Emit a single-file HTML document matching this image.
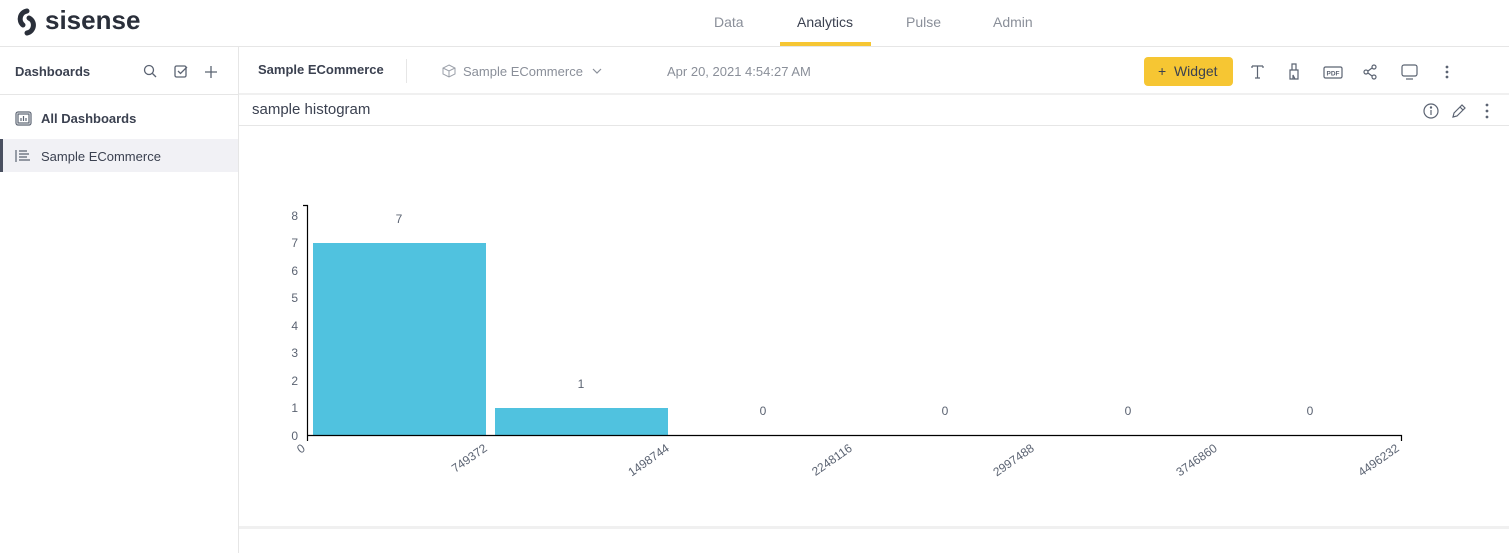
<!DOCTYPE html><html><head><meta charset="utf-8"><style>
*{margin:0;padding:0;box-sizing:border-box}
body{width:1509px;height:553px;background:#fff;font-family:"Liberation Sans",sans-serif;color:#5b6372;position:relative;overflow:hidden}
.abs{position:absolute}
.hdr{left:0;top:0;width:1509px;height:47px;border-bottom:1px solid #e6e6e6}
.tab{top:14px;font-size:14px;color:#8a8f99}
.side{left:0;top:47px;width:239px;height:506px;border-right:1px solid #e6e6e6}
.b{font-weight:bold;color:#3b4150}
</style></head><body>
<div class="abs hdr">
<svg class="abs" style="left:17px;top:8px" width="24" height="28" viewBox="0 0 24 28"><path d="M10 3 A8 8 0 0 0 6 17" stroke="#2a2f3a" stroke-width="5" fill="none" stroke-linecap="round"/><path d="M12 10 A8 8 0 0 1 10 25" stroke="#2a2f3a" stroke-width="5" fill="none" stroke-linecap="round"/></svg>
<div class="abs" style="left:45px;top:5px;font-size:26px;font-weight:bold;color:#2a2f3a;letter-spacing:0px">sisense</div>
<div class="abs tab" style="left:714px">Data</div>
<div class="abs tab" style="left:797px;color:#3b4150">Analytics</div>
<div class="abs tab" style="left:906px">Pulse</div>
<div class="abs tab" style="left:993px">Admin</div>
<div class="abs" style="left:780px;top:42px;width:91px;height:4px;background:#f6c633"></div>
</div>
<div class="abs side">
<div class="abs b" style="left:15px;top:17px;font-size:13px">Dashboards</div>
<svg class="abs" style="left:142px;top:17px" width="80" height="16" fill="none" stroke="#5b6372" stroke-width="1.3"><circle cx="7" cy="6" r="4.5"/><path d="M10.5 9.5 L14 13"/><rect x="33" y="2" width="11" height="11" rx="1.5"/><path d="M36 7 l2.5 2.5 L45 3"/><path d="M69 2 v12 M63 8 h12"/></svg>
<div class="abs" style="left:0;top:47px;width:238px;height:1px;background:#e6e6e6"></div>
<svg class="abs" style="left:15px;top:64px" width="18" height="16" fill="none" stroke="#5b6372" stroke-width="1.2"><rect x="1" y="1" width="15" height="13" rx="2"/><rect x="3" y="3" width="11" height="9"/><path d="M6 10v-3M8.5 10V5M11 10V7"/></svg>
<div class="abs b" style="left:41px;top:64px;font-size:13px">All Dashboards</div>
<div class="abs" style="left:0;top:92px;width:238px;height:33px;background:#f1f1f5;border-left:3px solid #4a5060"></div>
<svg class="abs" style="left:15px;top:103px" width="16" height="12" stroke="#5b6372" stroke-width="1.2"><path d="M1 0v12M4 1h8M4 4h10M4 7h8M4 10h11"/></svg>
<div class="abs" style="left:41px;top:102px;font-size:13px;color:#3b4150">Sample ECommerce</div>
</div>
<div class="abs b" style="left:258px;top:62px;font-size:13px">Sample ECommerce</div>
<div class="abs" style="left:406px;top:59px;width:1px;height:24px;background:#e6e6e6"></div>
<svg class="abs" style="left:442px;top:64px" width="14" height="14" fill="none" stroke="#9a9fa8" stroke-width="1"><path d="M7 1 L13 4 V10 L7 13 L1 10 V4 Z M1 4 L7 7 L13 4 M7 7 V13"/></svg>
<div class="abs" style="left:463px;top:64px;font-size:13px;color:#8a8f99">Sample ECommerce</div>
<svg class="abs" style="left:592px;top:68px" width="10" height="6" fill="none" stroke="#8a8f99" stroke-width="1.2"><path d="M1 1l4 4 4-4"/></svg>
<div class="abs" style="left:667px;top:64px;font-size:13px;color:#8a8f99">Apr 20, 2021 4:54:27 AM</div>
<div class="abs" style="left:1144px;top:57px;width:89px;height:29px;background:#f6c633;border-radius:4px;font-size:14px;color:#3b4150;padding:6px 0 0 14px">+&nbsp; Widget</div>
<svg class="abs" style="left:1248px;top:60px" width="215" height="24" fill="none" stroke="#5b6372" stroke-width="1.2">
<path d="M4 6h11M4 6v2M15 6v2M9.5 6v12M7 18h5"/>
<path d="M44 4h4v6h-4z M42 10h8v9h-8z M45 19v-4l2 4"/>
<rect x="76" y="7" width="18" height="11" rx="1.5"/><text x="78.5" y="15.5" font-size="6.5" fill="#5b6372" stroke="none" font-family="Liberation Sans" font-weight="bold">PDF</text>
<circle cx="118" cy="12" r="2"/><circle cx="126" cy="7" r="2"/><circle cx="126" cy="17" r="2"/><path d="M120 11l4-3M120 13l4 3"/>
<rect x="154" y="5" width="15" height="11" rx="2"/><path d="M158 19h7"/>
<circle cx="199" cy="7" r="0.8" fill="#5b6372"/><circle cx="199" cy="12" r="0.8" fill="#5b6372"/><circle cx="199" cy="17" r="0.8" fill="#5b6372"/>
</svg>
<div class="abs" style="left:239px;top:93px;width:1270px;height:2px;background:#f0f0f0"></div>
<div class="abs" style="left:252px;top:101px;font-size:15px;color:#3b4150">sample histogram</div>
<svg class="abs" style="left:1420px;top:100px" width="80" height="22" fill="none" stroke="#5b6372" stroke-width="1.2">
<circle cx="11" cy="11" r="7"/><path d="M11 10v5"/><circle cx="11" cy="7.5" r="0.6" fill="#5b6372"/>
<path d="M33 17l1-4 8-8 3 3-8 8z M40 7l3 3"/>
<circle cx="67" cy="5" r="0.8" fill="#5b6372"/><circle cx="67" cy="11" r="0.8" fill="#5b6372"/><circle cx="67" cy="17" r="0.8" fill="#5b6372"/>
</svg>
<div class="abs" style="left:239px;top:125px;width:1270px;height:1px;background:#e6e6e6"></div>
<svg class="abs" style="left:0;top:0" width="1509" height="553" font-family="Liberation Sans" font-size="12" fill="#5b6372">
<rect x="313" y="243" width="173" height="192" fill="#50c2df"/>
<rect x="495" y="408" width="173" height="27" fill="#50c2df"/>
<path d="M303 205.5h4.5V441 M307 435.5H1401.5V441" stroke="#000" stroke-width="1.2" fill="none"/>
<g text-anchor="end"><text x="298" y="220">8</text><text x="298" y="247">7</text><text x="298" y="275">6</text><text x="298" y="302">5</text><text x="298" y="330">4</text><text x="298" y="357">3</text><text x="298" y="385">2</text><text x="298" y="412">1</text><text x="298" y="440">0</text></g>
<g text-anchor="middle"><text x="399" y="223">7</text><text x="581" y="388">1</text><text x="763" y="415">0</text><text x="945" y="415">0</text><text x="1128" y="415">0</text><text x="1310" y="415">0</text></g>
<g text-anchor="end">
<text transform="translate(306,450) rotate(-35)">0</text>
<text transform="translate(488,450) rotate(-35)">749372</text>
<text transform="translate(670,450) rotate(-35)">1498744</text>
<text transform="translate(853,450) rotate(-35)">2248116</text>
<text transform="translate(1035,450) rotate(-35)">2997488</text>
<text transform="translate(1218,450) rotate(-35)">3746860</text>
<text transform="translate(1400,450) rotate(-35)">4496232</text>
</g>
</svg>
<div class="abs" style="left:239px;top:526px;width:1270px;height:3px;background:#f0f0f0"></div>
</body></html>
